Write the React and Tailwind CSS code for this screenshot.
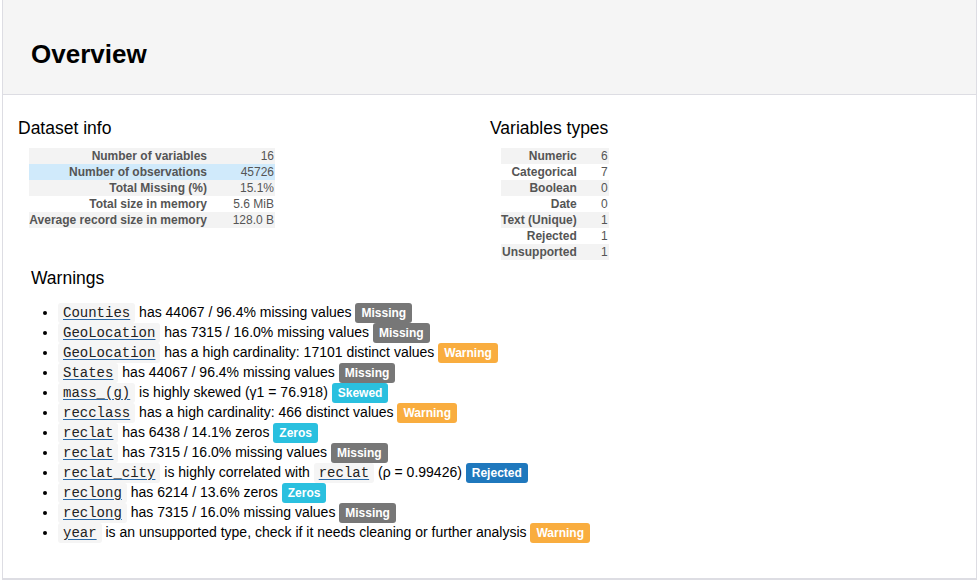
import React from "react";

const datasetInfo = [
  ["Number of variables", "16"],
  ["Number of observations", "45726"],
  ["Total Missing (%)", "15.1%"],
  ["Total size in memory", "5.6 MiB"],
  ["Average record size in memory", "128.0 B"],
];

const varTypes = [
  ["Numeric", "6"],
  ["Categorical", "7"],
  ["Boolean", "0"],
  ["Date", "0"],
  ["Text (Unique)", "1"],
  ["Rejected", "1"],
  ["Unsupported", "1"],
];

const badgeColors = {
  Missing: "bg-[#777777]",
  Warning: "bg-[#f9ad3f]",
  Skewed: "bg-[#2ac0df]",
  Zeros: "bg-[#2ac0df]",
  Rejected: "bg-[#1f78bd]",
};

const warnings = [
  { v: "Counties", text: "has 44067 / 96.4% missing values", b: "Missing" },
  { v: "GeoLocation", text: "has 7315 / 16.0% missing values", b: "Missing" },
  { v: "GeoLocation", text: "has a high cardinality: 17101 distinct values", b: "Warning" },
  { v: "States", text: "has 44067 / 96.4% missing values", b: "Missing" },
  { v: "mass_(g)", text: "is highly skewed (γ1 = 76.918)", b: "Skewed" },
  { v: "recclass", text: "has a high cardinality: 466 distinct values", b: "Warning" },
  { v: "reclat", text: "has 6438 / 14.1% zeros", b: "Zeros" },
  { v: "reclat", text: "has 7315 / 16.0% missing values", b: "Missing" },
  { v: "reclat_city", text: "is highly correlated with", v2: "reclat", text2: "(ρ = 0.99426)", b: "Rejected" },
  { v: "reclong", text: "has 6214 / 13.6% zeros", b: "Zeros" },
  { v: "reclong", text: "has 7315 / 16.0% missing values", b: "Missing" },
  { v: "year", text: "is an unsupported type, check if it needs cleaning or further analysis", b: "Warning" },
];

const Code = ({ children }) => (
  <code className="bg-[#f5f5f5] px-[5px] py-[2px] rounded-[3px] font-['Liberation_Mono',monospace] text-[14px] text-[#222] underline decoration-[#2a6aa8] underline-offset-2">
    {children}
  </code>
);

const InfoTable = ({ rows, labelW, valueW, highlight }) => (
  <table className="border-collapse text-[12px] leading-[16px] text-[#555] whitespace-nowrap">
    <tbody>
      {rows.map(([k, v], i) => (
        <tr
          key={k}
          className={
            i === highlight ? "bg-[#d0eafb]" : i % 2 === 0 ? "bg-[#f3f3f3]" : "bg-white"
          }
        >
          <th className={`text-right font-bold p-0 pr-[14px] ${labelW}`}>{k}</th>
          <td className={`text-right p-0 pr-[1px] ${valueW}`}>{v}</td>
        </tr>
      ))}
    </tbody>
  </table>
);

export default function App() {
  return (
    <div className="bg-white h-[581px] font-['Liberation_Sans',Arial,sans-serif] text-black">
      <div className="ml-[2px] w-[975px] border-l border-r border-b-2 border-[#dddde3] h-[580px]">
        <div className="bg-[#f5f5f5] h-[95px] border-b border-[#dddde3] pl-[28px] pt-[37px]">
          <h1 className="text-[26px] font-bold leading-[34px]">Overview</h1>
        </div>
        <div className="flex pt-[23px]">
          <div className="w-[472px] pl-[15px]">
            <h2 className="text-[17.5px] leading-[20px] mb-[10px]">Dataset info</h2>
            <div className="pl-[11px]">
              <InfoTable rows={datasetInfo} labelW="w-[192px]" valueW="w-[54px]" highlight={1} />
            </div>
          </div>
          <div className="pl-[15px]">
            <h2 className="text-[17.5px] leading-[20px] mb-[10px]">Variables types</h2>
            <div className="pl-[11px]">
              <InfoTable rows={varTypes} labelW="w-[89px]" valueW="w-[18px]" />
            </div>
          </div>
        </div>
        <div className="pl-[28px] pt-[8px]">
          <h2 className="text-[17.5px] leading-[20px] mb-[14px]">Warnings</h2>
          <ul className="list-disc pl-[27px] text-[14px] leading-[20px]">
            {warnings.map((w, i) => (
              <li key={i} className="h-[20px] whitespace-nowrap">
                <Code>{w.v}</Code> {w.text}{" "}
                {w.v2 && (
                  <>
                    <Code>{w.v2}</Code> {w.text2}{" "}
                  </>
                )}
                <span
                  className={`${badgeColors[w.b]} text-white font-bold text-[12px] px-[6px] py-[4px] rounded-[3px] leading-[12px] inline-block`}
                >
                  {w.b}
                </span>
              </li>
            ))}
          </ul>
        </div>
      </div>
    </div>
  );
}
